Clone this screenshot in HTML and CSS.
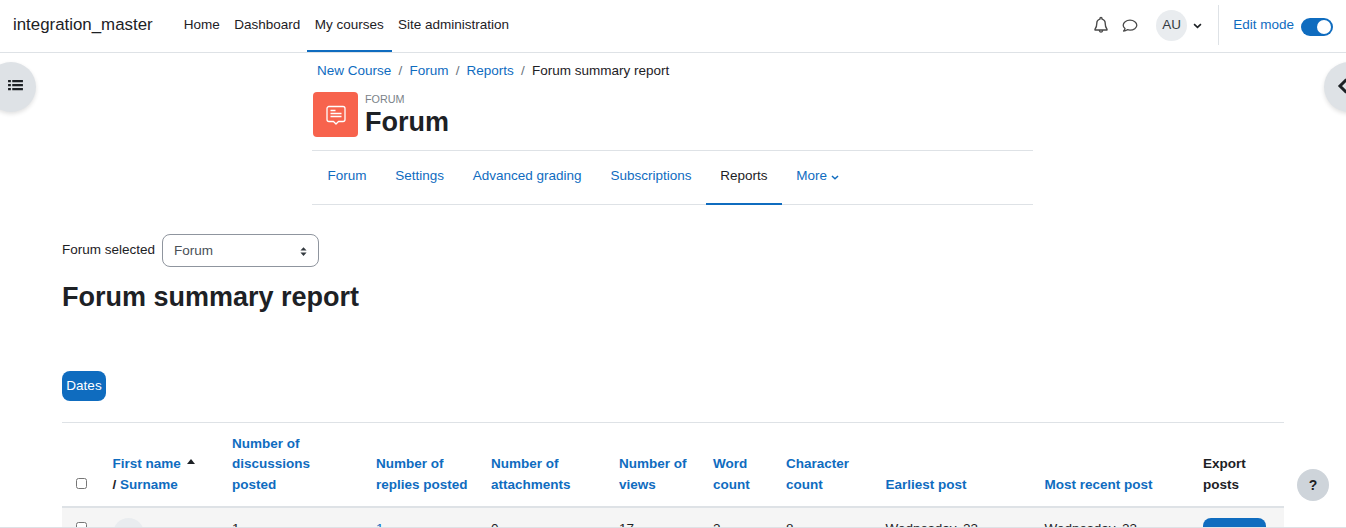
FILE: index.html
```html
<!DOCTYPE html>
<html lang="en">
<head>
<meta charset="utf-8">
<title>Forum summary report</title>
<link rel="stylesheet" href="styles.css">
</head>
<body>
<header class="navbar">
  <a class="brand">integration_master</a>
  <nav class="primary">
    <a>Home</a>
    <a>Dashboard</a>
    <a class="active">My courses</a>
    <a>Site administration</a>
  </nav>
  <div class="usernav">
    <svg class="ico bell" viewBox="0 0 16 18"><path d="M8 1.500c-.6 0-1 .4-1 1v.6C5 3.600 3.800 5.200 3.800 7.300c0 3.200-.7 4.700-1.800 5.900v.8h12v-.8c-1.100-1.200-1.800-2.700-1.800-5.900 0-2.100-1.200-3.700-3.200-4.200v-.6c0-.6-.4-1-1-1zM6.400 14.600c.2.9.8 1.500 1.600 1.500s1.400-.6 1.600-1.500" fill="none" stroke="#4a4a4a" stroke-width="1.400" stroke-linejoin="round"/></svg>
    <svg class="ico chat" viewBox="0 0 16 14"><path d="M8 1.200c-3.800 0-6.800 2.200-6.800 5 0 1.300.7 2.500 1.800 3.400-.2.9-.7 1.700-1.400 2.400 1.400-.1 2.700-.6 3.700-1.300.8.200 1.700.4 2.700.4 3.800 0 6.800-2.200 6.800-4.900s-3-5-6.800-5z" fill="none" stroke="#4a4a4a" stroke-width="1.300" stroke-linejoin="round"/></svg>
    <span class="avatar">AU</span>
    <svg class="caret" viewBox="0 0 10 6"><path d="M1.200 1l3.800 3.600L8.800 1" fill="none" stroke="#1d2125" stroke-width="1.800"/></svg>
    <span class="divider"></span>
    <a class="editlabel">Edit mode</a>
    <span class="toggle"><span class="knob"></span></span>
  </div>
</header>

<button class="drawer left" aria-label="Open course index">
  <svg viewBox="0 0 16 14" width="15" height="13"><path d="M0 1h3v2.400H0zM4.500 1H16v2.400H4.500zM0 5.300h3v2.400H0zM4.500 5.300H16v2.400H4.500zM0 9.600h3V12H0zM4.500 9.600H16V12H4.500z" fill="#1d2125"/></svg>
</button>
<button class="drawer right" aria-label="Open block drawer">
  <svg viewBox="0 0 12 16" width="12" height="16"><path d="M9.500 1.500L3 8l6.500 6.500" fill="none" stroke="#1d2125" stroke-width="3"/></svg>
</button>

<main>
  <div class="narrow">
    <ol class="crumbs">
      <li><a>New Course</a></li>
      <li class="sep">/</li>
      <li><a>Forum</a></li>
      <li class="sep">/</li>
      <li><a>Reports</a></li>
      <li class="sep">/</li>
      <li>Forum summary report</li>
    </ol>
    <div class="heading">
      <span class="modicon">
        <svg viewBox="0 0 24 24" width="24" height="24"><path d="M5 3.500h14a2 2 0 0 1 2 2v11a2 2 0 0 1-2 2h-4.500L12 21l-2.500-2.500H5a2 2 0 0 1-2-2v-11a2 2 0 0 1 2-2z" fill="none" stroke="#fff" stroke-width="1.300" stroke-linejoin="round"/><path d="M6.500 7.500h5M6.500 10.500h11M6.500 13.500h11" stroke="#fff" stroke-width="1.300"/></svg>
      </span>
      <div class="titles">
        <div class="modtype">FORUM</div>
        <h1>Forum</h1>
      </div>
    </div>
    <nav class="tabs">
      <a>Forum</a>
      <a>Settings</a>
      <a>Advanced grading</a>
      <a>Subscriptions</a>
      <a class="current">Reports</a>
      <a>More <svg class="morecaret" viewBox="0 0 10 6"><path d="M1.200 1l3.800 3.600L8.800 1" fill="none" stroke="#0f6cbf" stroke-width="1.800"/></svg></a>
    </nav>
  </div>

  <div class="wide">
    <div class="selector">
      <label>Forum selected</label>
      <span class="select">Forum
        <svg viewBox="0 0 8 12" width="7" height="11"><path d="M4 1L7.500 4.800H.5zM4 11L.5 7.200h7z" fill="#343a40"/></svg>
      </span>
    </div>
    <h2>Forum summary report</h2>
    <button class="dates">Dates</button>
    <table class="report">
      <colgroup>
        <col class="c1"><col class="c2"><col class="c3"><col class="c4"><col class="c5"><col class="c6"><col class="c7"><col class="c8"><col class="c9"><col class="c10"><col class="c11">
      </colgroup>
      <thead>
        <tr>
          <th class="chk"><input type="checkbox"></th>
          <th><span class="namerow"><a>First name</a><span class="sort"></span></span><br><span class="plain">/</span> <a>Surname</a></th>
          <th><a>Number of<br>discussions<br>posted</a></th>
          <th><a>Number of replies posted</a></th>
          <th><a>Number of attachments</a></th>
          <th><a>Number of views</a></th>
          <th><a>Word count</a></th>
          <th><a>Character count</a></th>
          <th><a>Earliest post</a></th>
          <th><a>Most recent post</a></th>
          <th class="plain">Export posts</th>
        </tr>
      </thead>
      <tbody>
        <tr>
          <td class="chk"><input type="checkbox"></td>
          <td class="avatarcell"><span class="useravatar"></span></td>
          <td>1</td>
          <td><a>1</a></td>
          <td>0</td>
          <td>17</td>
          <td>2</td>
          <td>8</td>
          <td>Wednesday, 23</td>
          <td>Wednesday, 23</td>
          <td class="exportcell"><button class="export">Export</button></td>
        </tr>
      </tbody>
    </table>
  </div>
</main>

<button class="help" aria-label="Help">?</button>
<div class="bottomline"></div>
</body>
</html>
```

FILE: styles.css
```css
* { box-sizing: border-box; }
html, body { margin: 0; height: 528px; overflow: hidden; }
body { font-family: "Liberation Sans", Arial, sans-serif; font-size: 13.5px; color: #1d2125; background: #fff; line-height: 20.25px; }
a { color: #0f6cbf; text-decoration: none; }

.navbar { height: 53px; border-bottom: 1px solid #dee2e6; display: flex; align-items: stretch; padding-left: 13px; background: #fff; }
.brand { color: #1d2125; font-size: 16.875px; align-self: center; margin-right: 24px; margin-top: -2px; }
.primary { display: flex; align-items: stretch; }
.primary a { color: #1d2125; padding: 0 7.200px; display: flex; align-items: center; margin-top: -2px; }
.primary a.active { padding: 2px 8px 0; margin: -2px -.8px 0; border-bottom: 2px solid #0f6cbf; }
.usernav { margin-left: auto; display: flex; align-items: center; padding-right: 13px; margin-top: -2px; }
.ico.bell { width: 16px; height: 18px; margin-right: 13px; }
.ico.chat { width: 16px; height: 14px; margin-right: 18px; margin-top: 1px; }
.avatar { width: 31px; height: 31px; border-radius: 50%; background: #e9ecef; display: flex; align-items: center; justify-content: center; color: #343a40; }
.caret { width: 9px; height: 6px; margin-left: 6px; margin-top: 1px; }
.divider { width: 1px; height: 40px; background: #dee2e6; margin: 0 14px 0 16px; }
.toggle { width: 32px; height: 18px; border-radius: 9px; background: #0f6cbf; margin-left: 7px; margin-top: 4px; position: relative; display: block; }
.knob { position: absolute; width: 14px; height: 14px; background: #fff; border-radius: 50%; right: 2px; top: 2px; }

.drawer { position: absolute; top: 62px; width: 50px; height: 50px; border: 0; padding: 0; border-radius: 50%; background: #dee2e6; box-shadow: 0 2px 4px rgba(0,0,0,.12); display: flex; align-items: center; justify-content: center; }
.drawer.left { left: -14px; padding-left: 8px; padding-bottom: 3px; }
.drawer.right { left: 1324px; justify-content: flex-start; padding-left: 13px; padding-bottom: 2px; }

.narrow { width: 721px; margin-left: 312px; }
.crumbs { list-style: none; margin: 0; padding: 8px 0 0 5px; display: flex; height: 39px; }
.crumbs .sep { color: #6a737b; padding: 0 7.200px; }
.heading { display: flex; height: 58px; }
.modicon { width: 45px; height: 45px; border-radius: 4px; background: #f7634d; display: flex; align-items: center; justify-content: center; margin: 0 7px 0 1px; }
.modtype { font-size: 10.800px; line-height: 14px; color: #7b8289; }
h1 { font-size: 27px; line-height: 30px; margin: 1px 0 0; font-weight: 700; }
.tabs { border-top: 1px solid #dee2e6; border-bottom: 1px solid #dee2e6; display: flex; height: 55px; padding-left: 1px; }
.tabs a { padding: 0 14.400px 2px; display: flex; align-items: center; }
.tabs a.current { color: #1d2125; border-bottom: 2px solid #0f6cbf; margin-bottom: -1px; padding-bottom: 1px; }
.morecaret { width: 8px; height: 5px; margin-left: 4px; margin-top: 2px; }

.wide { margin: 29px 62px 0; }
.selector { display: flex; align-items: center; gap: 7px; }
.select { width: 157px; height: 33px; border: 1px solid #8f959e; border-radius: 8px; color: #495057; display: flex; align-items: center; justify-content: space-between; padding: 1px 11px 0; }
h2 { font-size: 27px; line-height: 32px; margin: 14px 0 58px; font-weight: 700; }
.dates { display: block; width: 44px; height: 30px; padding: 0; border: 0; border-radius: 8px; background: #0f6cbf; color: #fff; font: inherit; }

.report { margin-top: 21px; width: 1222px; table-layout: fixed; border-collapse: separate; border-spacing: 0; border-top: 1px solid #dee2e6; }
.c1 { width: 42.500px; } .c2 { width: 119.500px; } .c3 { width: 144px; } .c4 { width: 115px; } .c5 { width: 128px; } .c6 { width: 94px; } .c7 { width: 73px; } .c8 { width: 99.500px; } .c9 { width: 159px; } .c10 { width: 158.500px; } .c11 { width: 89px; }
.report th { text-align: left; vertical-align: bottom; padding: 11px 8px 11px; font-weight: 700; border-bottom: 2px solid #dee2e6; }
.report th.chk { padding-left: 14px; padding-right: 0; padding-bottom: 17px; }
.report th.plain, .plain { color: #1d2125; }
.report td { vertical-align: top; padding: 11px 8px; background: #f5f5f5; }
.report td.chk { padding: 14px 0 0 14px; }
.report td.avatarcell { padding-top: 10px; }
.report td.exportcell { padding-top: 10px; }
input[type=checkbox] { width: 11px; height: 11px; margin: 0; display: block; appearance: none; border: 1px solid #767676; border-radius: 2.500px; background: #fff; }
.namerow { display: inline-flex; }
.sort { width: 0; height: 0; border-left: 4.500px solid transparent; border-right: 4.500px solid transparent; border-bottom: 5px solid #1d2125; margin: 5px 0 0 6px; }
.useravatar { display: block; width: 31px; height: 31px; border-radius: 50%; background: #e9ecef; }
.export { width: 63px; height: 36px; border: 0; border-radius: 8px; background: #0f6cbf; color: #fff; font: inherit; }

.help { position: fixed; left: 1297px; top: 469px; width: 32px; height: 32px; border-radius: 50%; border: 0; padding: 0; background: #ced4da; color: #1d2125; font: 700 14px "Liberation Sans", Arial, sans-serif; }
.bottomline { position: fixed; left: 0; right: 0; top: 527px; height: 1px; background: #dee2e6; }
```
